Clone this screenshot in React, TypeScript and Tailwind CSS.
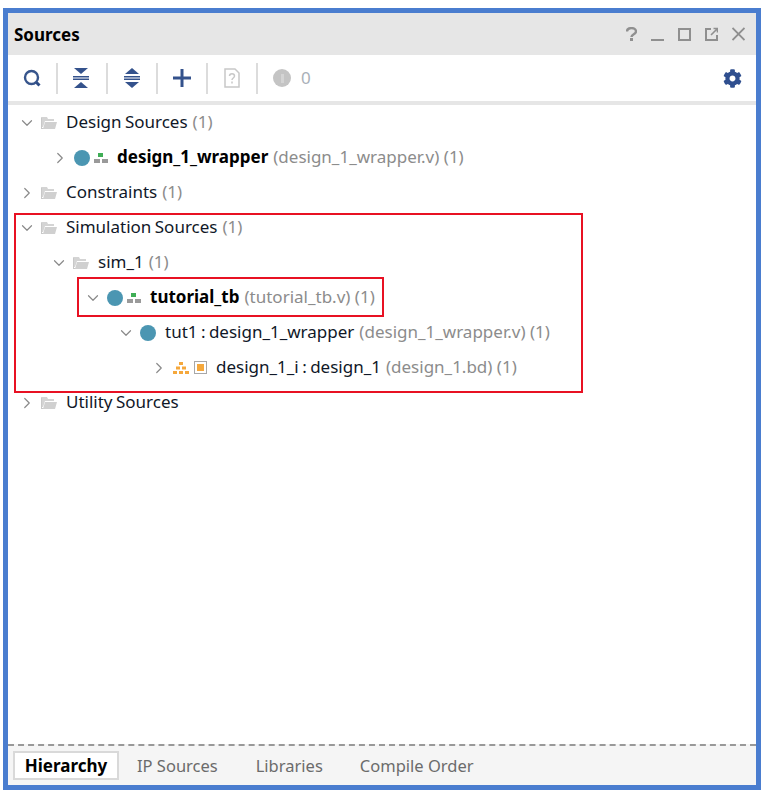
import { ChevronDown, ChevronRight } from 'lucide-react'
import { FaCog } from 'react-icons/fa'
import type { ReactNode } from 'react'

const Folder = () => (
  <svg width="16" height="14" viewBox="0 0 16 14" className="shrink-0">
    <path d="M0 1h6l1 2h6v2H4L2 11H1z" fill="#d4d4d4" />
    <path d="M0 2h1v10h12v1H0z" fill="#c8c8c8" />
    <path d="M4 6h12l-2 7H2z" fill="#d0d0d0" />
  </svg>
)

const Dot = () => <span className="w-4 h-4 shrink-0 rounded-full bg-[#4b96b2]" />

const Hier = () => (
  <svg width="14" height="12" viewBox="0 0 14 12" className="shrink-0">
    <rect x="4" y="1" width="5" height="4" fill="#3fae56" />
    <rect x="0" y="7" width="6" height="4" fill="#9a9a9a" />
    <rect x="8" y="7" width="6" height="4" fill="#9a9a9a" />
  </svg>
)

const BlockDesign = () => (
  <svg width="36" height="14" viewBox="0 0 36 14" className="shrink-0">
    <g fill="#f5a83c">
      <rect x="6" y="1" width="4" height="3" />
      <rect x="3" y="5.5" width="4" height="3" />
      <rect x="9" y="5.5" width="4" height="3" />
      <rect x="0" y="10" width="4" height="3" />
      <rect x="6" y="10" width="4" height="3" />
      <rect x="12" y="10" width="4" height="3" />
      <rect x="24" y="3" width="7" height="7" />
    </g>
    <rect x="21.5" y="0.5" width="12" height="12" fill="none" stroke="#a8a8a8" />
  </svg>
)

type RowProps = {
  pad: string
  open?: boolean
  icons: ReactNode
  gap: string
  label: string
  bold?: boolean
  detail: string
}

const Row = ({ pad, open, icons, gap, label, bold, detail }: RowProps) => (
  <div className={`h-[35px] flex items-center whitespace-nowrap ${pad}`}>
    {open ? (
      <ChevronDown size={18} strokeWidth={1.6} className="shrink-0 text-[#8a8a8a]" />
    ) : (
      <ChevronRight size={18} strokeWidth={1.6} className="shrink-0 text-[#8a8a8a]" />
    )}
    <div className={`flex items-center shrink-0 ml-[5px] ${gap}`}>{icons}</div>
    <span className={`mb-[2px] [word-spacing:-1px] ${bold ? 'font-bold text-black' : 'text-[#101828]'}`}>{label}</span>
    <span className="mb-[2px] text-[#8c8c8c] ml-[5px]">{detail}</span>
  </div>
)

const Sep = () => <span className="w-[2px] h-[31px] bg-[#dcdcdc] shrink-0" />

const TabLabel = ({ children, className }: { children: ReactNode; className: string }) => (
  <span className={`mt-[2px] text-[#6b6b6b] text-[16.5px] ${className}`}>{children}</span>
)

export default function App() {
  return (
    <div className="w-[766px] h-[796px] bg-white pl-[3px] pt-[8px] text-[17px] [font-family:'Noto_Sans',sans-serif]">
      <div className="relative w-[758px] h-[782px] border-[5px] border-[#4a7dcf] flex flex-col bg-white">
        {/* Title bar */}
        <div className="h-[42px] shrink-0 bg-[#e6e6e6] flex items-center pl-[6px] pr-[11px]">
          <span className="mt-[2px] font-bold text-[17px] text-black">Sources</span>
          <div className="ml-auto flex items-center gap-[14px] text-[#8f8f8f]">
            <svg width="11" height="14" viewBox="0 0 11 14" fill="none" stroke="currentColor" strokeWidth="2.4">
              <path d="M1 4.500c0-4.500 9-4.500 9 0 0 3-4.500 2.500-4.500 5.500" />
              <rect x="4" y="11" width="3" height="3" fill="currentColor" stroke="none" />
            </svg>
            <svg width="13" height="14" viewBox="0 0 13 14" fill="currentColor">
              <rect x="0" y="12" width="13" height="2" />
            </svg>
            <svg width="13" height="14" viewBox="0 0 13 14" fill="none" stroke="currentColor" strokeWidth="2">
              <rect x="1" y="2" width="11" height="11" />
            </svg>
            <svg width="13" height="14" viewBox="0 0 13 14" fill="none" stroke="currentColor" strokeWidth="2">
              <path d="M6 2H1v11h11V8" />
              <path d="M6 8l6-6M8.500 1.500h4v4" strokeWidth="1.600" />
            </svg>
            <svg width="13" height="14" viewBox="0 0 13 14" fill="none" stroke="currentColor" strokeWidth="1.800">
              <path d="M0.500 1l12 12M12.500 1L0.500 13" />
            </svg>
          </div>
        </div>

        {/* Toolbar */}
        <div className="h-[46px] shrink-0 flex items-center pl-[15px] pr-[15px]">
          <svg width="19" height="19" viewBox="0 0 19 19" fill="none" className="shrink-0">
            <circle cx="8.500" cy="8.500" r="6.500" stroke="#37558c" strokeWidth="2.400" />
            <path d="M13.500 13.500l3 3" stroke="#2b4a85" strokeWidth="3" />
          </svg>
          <span className="w-[14px]" />
          <Sep />
          <svg width="16" height="20" viewBox="0 0 16 20" className="shrink-0 ml-[15px]" fill="#34528c">
            <path d="M1 0h14l-7 6z" />
            <rect x="0" y="8" width="16" height="1.500" />
            <rect x="0" y="10.500" width="16" height="1.500" />
            <path d="M1 20h14l-7-6z" />
          </svg>
          <span className="w-[17px]" />
          <Sep />
          <svg width="16" height="20" viewBox="0 0 16 20" className="shrink-0 ml-[16px]" fill="#34528c">
            <path d="M8 0l7 6H1z" />
            <rect x="0" y="8" width="16" height="1.500" />
            <rect x="0" y="10.500" width="16" height="1.500" />
            <path d="M8 20l7-6H1z" />
          </svg>
          <span className="w-[16px]" />
          <Sep />
          <svg width="18" height="18" viewBox="0 0 18 18" className="shrink-0 ml-[15px]" fill="#34528c">
            <rect x="7.500" y="0" width="3" height="18" />
            <rect x="0" y="7.500" width="18" height="3" />
          </svg>
          <span className="w-[15px]" />
          <Sep />
          <svg width="16" height="20" viewBox="0 0 16 20" className="shrink-0 ml-[16px]" fill="none" stroke="#c8c8c8" strokeWidth="1.500">
            <path d="M1 1h10l4 4v14H1z" />
            <path d="M5.500 8c0-3 5-3 5 0 0 2-2.500 2-2.500 4M8 13.500v2" />
          </svg>
          <span className="w-[16px]" />
          <Sep />
          <span className="w-[18px] h-[18px] ml-[15px] rounded-full bg-[#c4c4c4] shrink-0 flex items-center justify-center">
            <span className="w-[3px] h-[9px] bg-[#d4d4d4]" />
          </span>
          <span className="ml-[10px] text-[#a9b0b8] text-[17px]">0</span>
          <FaCog size={19} className="ml-auto mr-[-1px] text-[#2f4f8f]" />
        </div>
        <div className="h-[4px] shrink-0 bg-[#e6e6e6]" />

        {/* Tree */}
        <div className="flex-1">
          <Row pad="pl-[10px]" open icons={<Folder />} gap="mr-[9px]" label="Design Sources" detail="(1)" />
          <Row pad="pl-[43px]" icons={<><Dot /><Hier /></>} gap="gap-[4px] mr-[9px]" label="design_1_wrapper" bold detail="(design_1_wrapper.v) (1)" />
          <Row pad="pl-[10px]" icons={<Folder />} gap="mr-[9px]" label="Constraints" detail="(1)" />
          <Row pad="pl-[10px]" open icons={<Folder />} gap="mr-[9px]" label="Simulation Sources" detail="(1)" />
          <Row pad="pl-[42px]" open icons={<Folder />} gap="mr-[9px]" label="sim_1" detail="(1)" />
          <Row pad="pl-[76px]" open icons={<><Dot /><Hier /></>} gap="gap-[4px] mr-[9px]" label="tutorial_tb" bold detail="(tutorial_tb.v) (1)" />
          <Row pad="pl-[109px]" open icons={<Dot />} gap="mr-[9px]" label="tut1 : design_1_wrapper" detail="(design_1_wrapper.v) (1)" />
          <Row pad="pl-[142px]" icons={<BlockDesign />} gap="mr-[7px]" label="design_1_i : design_1" detail="(design_1.bd) (1)" />
          <Row pad="pl-[10px]" icons={<Folder />} gap="mr-[9px]" label="Utility Sources" detail="" />
        </div>

        {/* Tabs */}
        <div className="h-[41px] shrink-0 bg-[#f5f5f5] border-t-2 border-dashed border-[#999999] flex items-center pl-[5px]">
          <span className="h-[29px] w-[106px] flex items-center justify-center bg-white border-2 border-[#d9d9d9] font-bold text-black text-[17px]">Hierarchy</span>
          <TabLabel className="ml-[18px]">IP Sources</TabLabel>
          <TabLabel className="ml-[38px]">Libraries</TabLabel>
          <TabLabel className="ml-[37px]">Compile Order</TabLabel>
        </div>

        {/* Annotation boxes */}
        <div className="absolute left-[6px] top-[200px] w-[569px] h-[180px] border-2 border-[#e81123] pointer-events-none" />
        <div className="absolute left-[69px] top-[264px] w-[307px] h-[40px] border-2 border-[#e81123] pointer-events-none" />
      </div>
    </div>
  )
}
